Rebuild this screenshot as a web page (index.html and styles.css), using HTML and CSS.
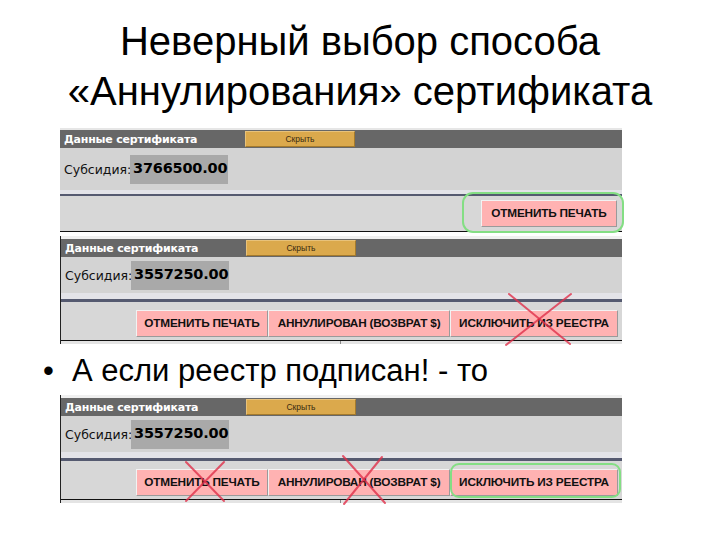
FILE: index.html
```html
<!DOCTYPE html>
<html lang="ru">
<head>
<meta charset="utf-8">
<link rel="stylesheet" href="styles.css">
</head>
<body>
<div class="slide">
  <h1 class="title">Неверный выбор способа<br>«Аннулирования» сертификата</h1>

  <div class="panel p1">
    <div class="topline"></div>
    <div class="hdr"><span class="hdr-title">Данные сертификата</span><span class="hide-btn">Скрыть</span></div>
    <div class="sub"><span class="sub-label">Субсидия:</span><span class="sub-val">3766500.00</span></div>
    <div class="strip"></div>
    <div class="rule"></div>
    <div class="btns">
      <span class="btn">ОТМЕНИТЬ ПЕЧАТЬ</span>
    </div>
    <div class="bottom-line"></div>
    <div class="green g1"></div>
  </div>

  <div class="panel p2 framed">
    <div class="topline"></div>
    <div class="hdr"><span class="hdr-title">Данные сертификата</span><span class="hide-btn">Скрыть</span></div>
    <div class="sub"><span class="sub-label">Субсидия:</span><span class="sub-val">3557250.00</span></div>
    <div class="strip"></div>
    <div class="rule"></div>
    <div class="btns">
      <span class="btn b1">ОТМЕНИТЬ ПЕЧАТЬ</span><span class="btn b2">АННУЛИРОВАН (ВОЗВРАТ $)</span><span class="btn b3">ИСКЛЮЧИТЬ ИЗ РЕЕСТРА</span>
    </div>
    <div class="tbl"><span class="tbl-cell"></span></div>
    <svg class="marks" width="562" height="120" viewBox="0 0 562 120">
      <line x1="448" y1="58" x2="509" y2="108"/>
      <line x1="510" y1="58" x2="445" y2="109"/>
    </svg>
  </div>

  <p class="bullet"><span class="dot">•</span>А если реестр подписан! - то</p>

  <div class="panel p3 framed">
    <div class="topline"></div>
    <div class="hdr"><span class="hdr-title">Данные сертификата</span><span class="hide-btn">Скрыть</span></div>
    <div class="sub"><span class="sub-label">Субсидия:</span><span class="sub-val">3557250.00</span></div>
    <div class="strip"></div>
    <div class="rule"></div>
    <div class="btns">
      <span class="btn b1">ОТМЕНИТЬ ПЕЧАТЬ</span><span class="btn b2">АННУЛИРОВАН (ВОЗВРАТ $)</span><span class="btn b3">ИСКЛЮЧИТЬ ИЗ РЕЕСТРА</span>
    </div>
    <div class="tbl"><span class="tbl-cell"></span></div>
    <div class="green g3"></div>
    <svg class="marks" width="562" height="120" viewBox="0 0 562 120">
      <line x1="125" y1="67" x2="163" y2="106"/>
      <line x1="163" y1="67" x2="125" y2="106"/>
      <line x1="282" y1="61" x2="324" y2="108"/>
      <line x1="321" y1="62" x2="283" y2="109"/>
    </svg>
  </div>
</div>
</body>
</html>
```

FILE: styles.css
```css
html, body {
  margin: 0;
  padding: 0;
  background: #ffffff;
}

.slide {
  width: 720px;
  height: 540px;
  overflow: hidden;
  font-family: "Liberation Sans", Arial, sans-serif;
}

.title {
  margin: 0;
  padding-top: 16px;
  font-weight: normal;
  font-size: 40px;
  line-height: 50px;
  text-align: center;
  color: #000;
}

.panel {
  position: relative;
  width: 562px;
  margin-left: 60px;
  font-family: "DejaVu Sans", Verdana, sans-serif;
}

.p1 { margin-top: 12px; }
.p2 { margin-top: 4px; }

.framed { border-left: 1px solid #222; width: 561px; }

.topline {
  height: 2px;
  background: #e6e6e6;
}
.p2 .topline, .p3 .topline { height: 3px; background: #f0f0f0; }

.hdr {
  height: 18px;
  background: #676767;
  display: flex;
  align-items: center;
}

.hdr-title {
  width: 181px;
  padding-left: 4px;
  color: #ffffff;
  font-size: 11px;
  font-weight: bold;
  letter-spacing: -0.2px;
  white-space: nowrap;
}

.hide-btn {
  box-sizing: border-box;
  width: 110px;
  height: 16px;
  background: #dba94c;
  border: 1px solid #a47a2c;
  border-top-color: #e8c27a;
  border-left-color: #e8c27a;
  color: #3a2a10;
  font-family: "Liberation Sans", Arial, sans-serif;
  font-size: 8.5px;
  line-height: 14px;
  text-align: center;
}

.sub {
  height: 42px;
  background: #d3d3d3;
  display: flex;
  align-items: center;
  padding-left: 4px;
}
.p2 .sub, .p3 .sub { height: 36px; }

.sub-label {
  width: 66px;
  font-size: 12.5px;
  color: #111;
}

.sub-val {
  box-sizing: border-box;
  width: 98px;
  height: 29px;
  background: #a9a9a9;
  padding-left: 3px;
  font-size: 14.5px;
  font-weight: bold;
  line-height: 27px;
  color: #000;
  letter-spacing: -0.2px;
}

.strip {
  height: 4px;
  background: #e3e3e8;
}
.p2 .strip, .p3 .strip { height: 6px; }

.rule {
  height: 2px;
  background: #555a70;
}
.p2 .rule, .p3 .rule { height: 3px; }

.btns {
  height: 35px;
  background: #d7d7d7;
  display: flex;
  justify-content: flex-end;
  align-items: flex-start;
  padding-right: 5px;
  box-sizing: border-box;
  padding-top: 4px;
}
.p2 .btns, .p3 .btns { height: 38px; padding-top: 8px; padding-right: 4px; }

.btn {
  box-sizing: border-box;
  height: 27px;
  width: 136px;
  background: #ffb2b2;
  border: 1px solid #9a9a9a;
  border-top-color: #f2f2f2;
  border-left-color: #f2f2f2;
  font-family: "Liberation Sans", Arial, sans-serif;
  font-weight: bold;
  font-size: 11.8px;
  line-height: 25px;
  text-align: center;
  color: #111;
  white-space: nowrap;
  letter-spacing: -0.2px;
}
.b1 { width: 132px; }
.b2 { width: 182px; }
.b3 { width: 168px; }

.bottom-line {
  height: 1px;
  background: #111;
}

.tbl {
  height: 3px;
  border-top: 1px solid #111;
  background: #e4e4e4;
  position: relative;
}
.tbl-cell {
  position: absolute;
  left: 279px;
  top: 0;
  width: 1px;
  height: 3px;
  background: #888;
}

.green {
  position: absolute;
  box-sizing: border-box;
  border: 2px solid #84de84;
}
.g1 {
  left: 402px;
  top: 64px;
  width: 162px;
  height: 41px;
  border-radius: 11px;
}
.g3 {
  left: 389px;
  top: 68px;
  width: 171px;
  height: 35px;
  border-radius: 9px;
}

.marks {
  position: absolute;
  left: 0;
  top: 0;
  overflow: visible;
}
.marks line {
  stroke: #e0304a;
  stroke-opacity: 0.8;
  stroke-width: 2;
  stroke-linecap: round;
}

.bullet {
  margin: 0;
  height: 51px;
  padding-top: 3px;
  box-sizing: border-box;
  font-family: "Liberation Sans", Arial, sans-serif;
  font-size: 31px;
  line-height: 47px;
  padding-left: 43px;
  color: #000;
}
.dot {
  display: inline-block;
  width: 29px;
}
```
